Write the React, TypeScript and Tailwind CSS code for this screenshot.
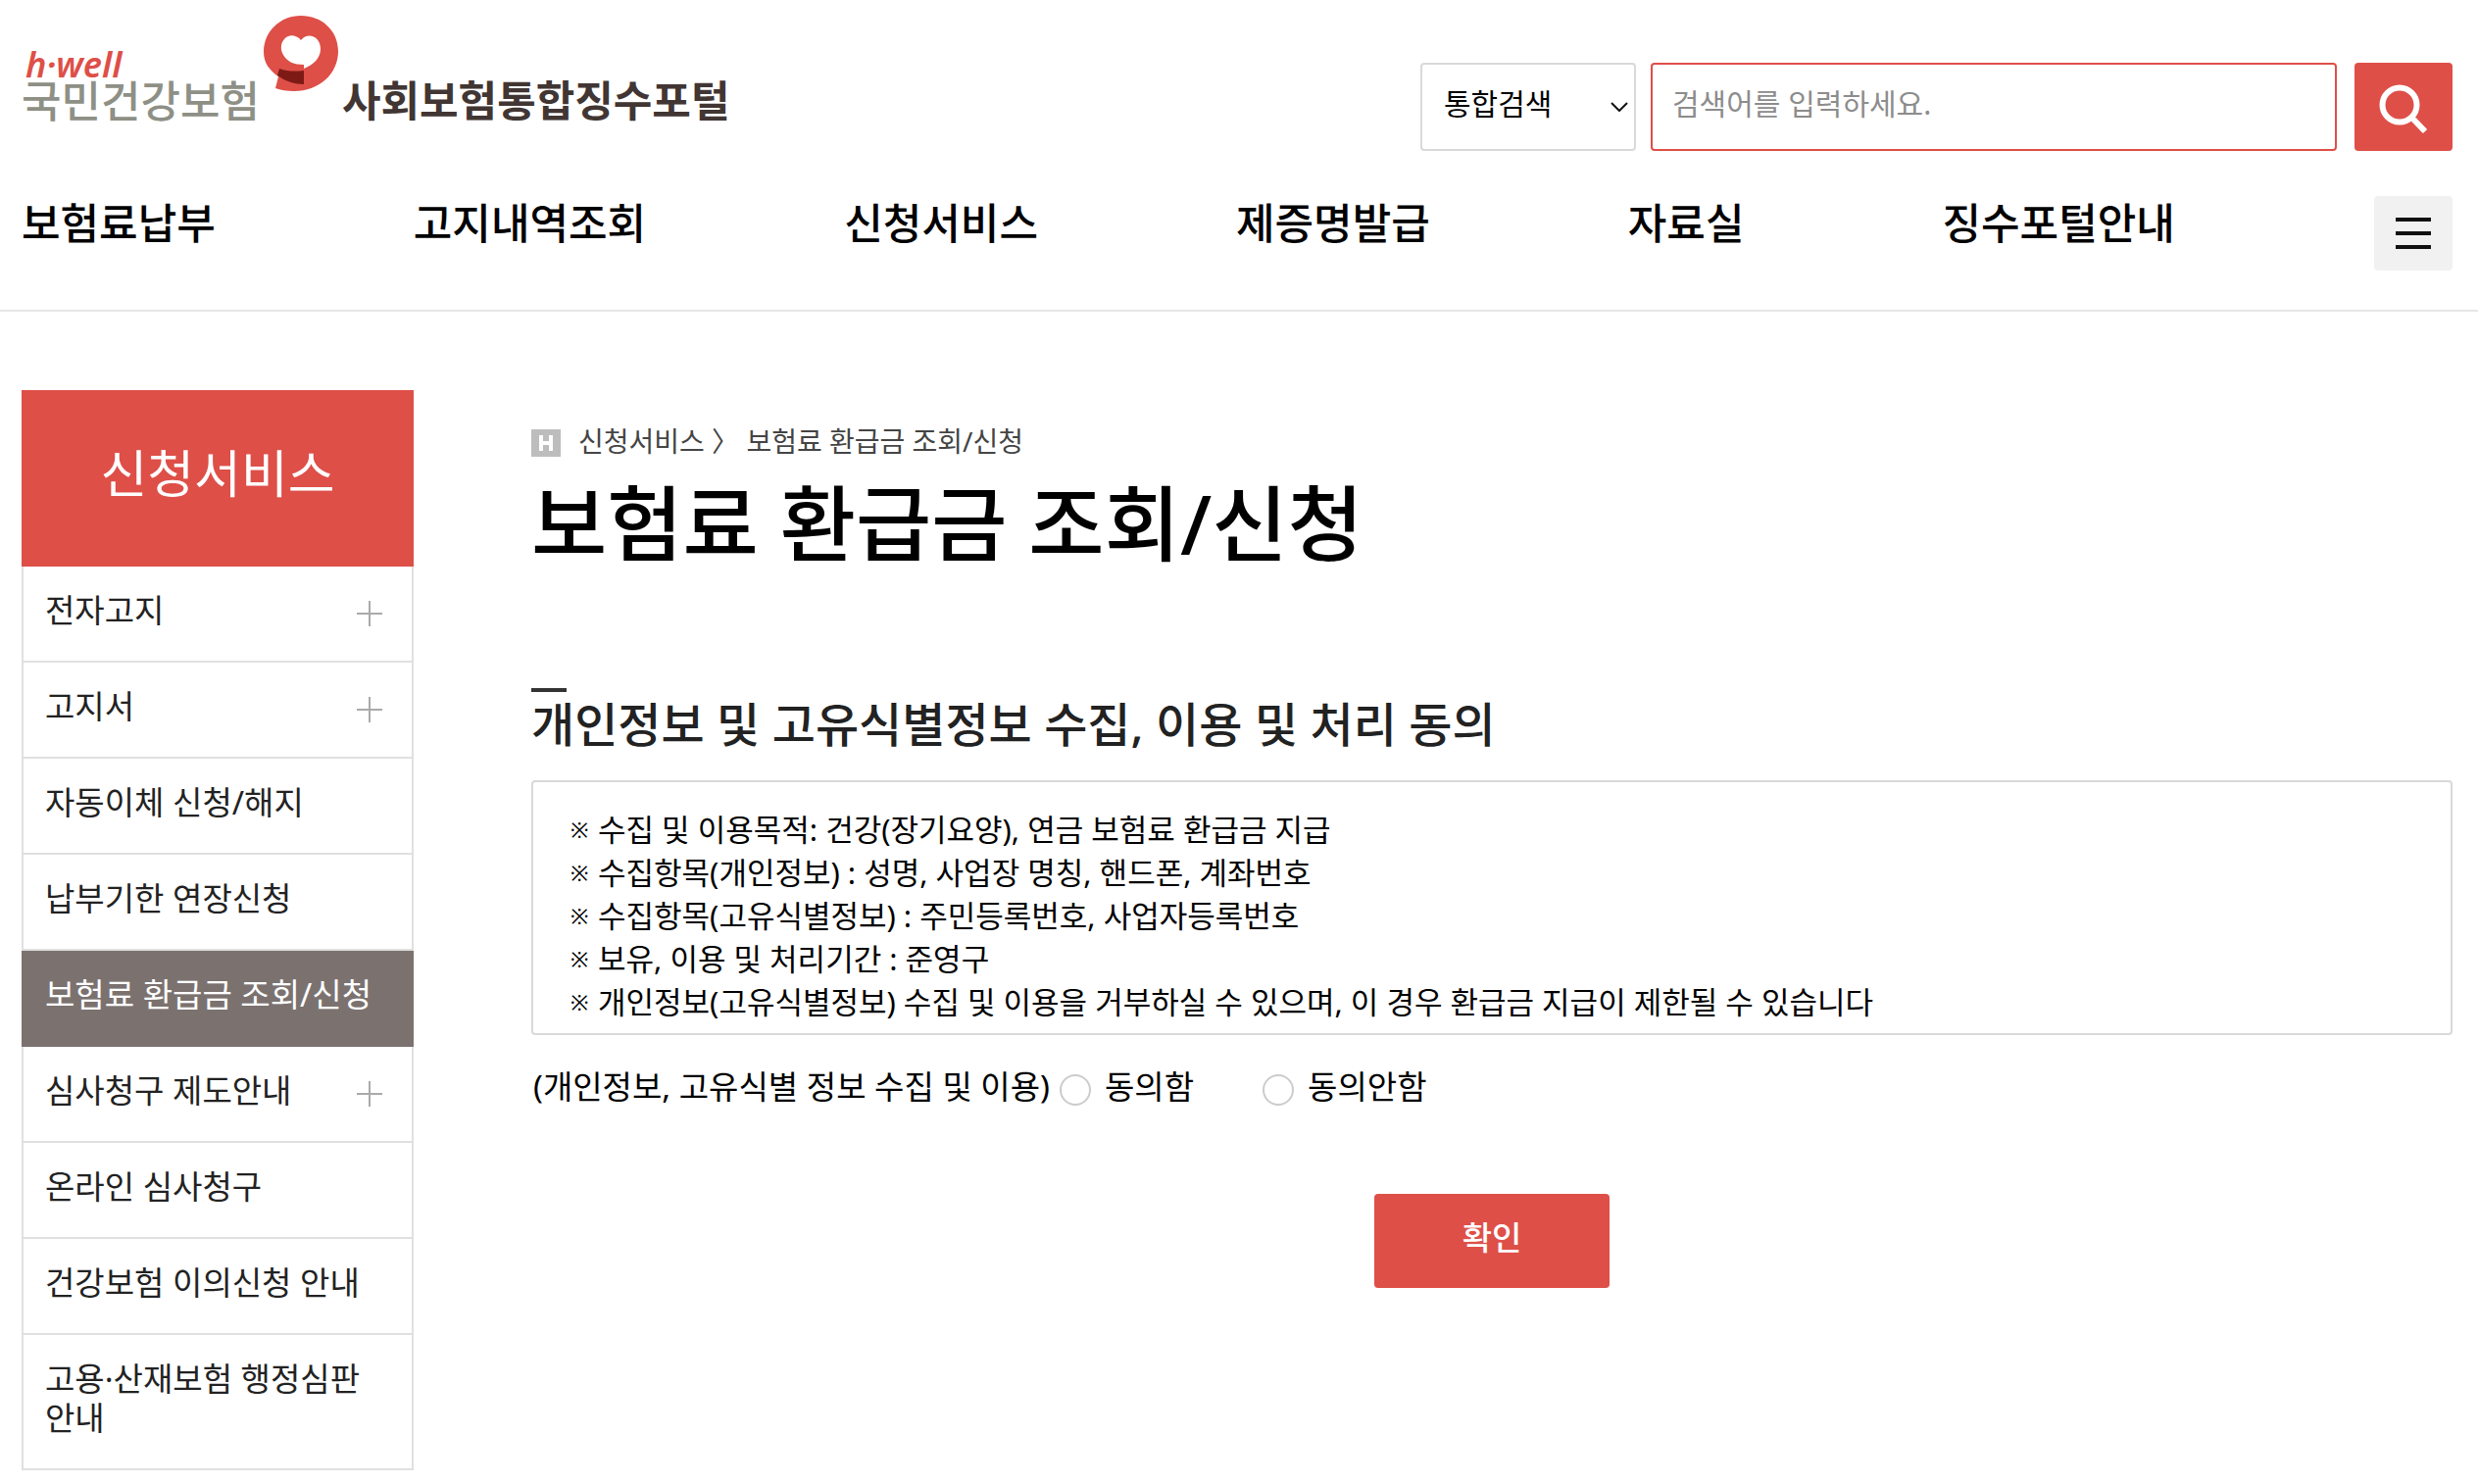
import { useState } from 'react';
import type { FormEvent } from 'react';

interface SideItem {
  label: string;
  expandable?: boolean;
  active?: boolean;
}

const NAV_ITEMS = ['보험료납부', '고지내역조회', '신청서비스', '제증명발급', '자료실', '징수포털안내'];

const SIDE_ITEMS: SideItem[] = [
  { label: '전자고지', expandable: true },
  { label: '고지서', expandable: true },
  { label: '자동이체 신청/해지' },
  { label: '납부기한 연장신청' },
  { label: '보험료 환급금 조회/신청', active: true },
  { label: '심사청구 제도안내', expandable: true },
  { label: '온라인 심사청구' },
  { label: '건강보험 이의신청 안내' },
  { label: '고용·산재보험 행정심판 안내' },
];

const TERMS = [
  '수집 및 이용목적: 건강(장기요양), 연금 보험료 환급금 지급',
  '수집항목(개인정보) : 성명, 사업장 명칭, 핸드폰, 계좌번호',
  '수집항목(고유식별정보) : 주민등록번호, 사업자등록번호',
  '보유, 이용 및 처리기간 : 준영구',
  '개인정보(고유식별정보) 수집 및 이용을 거부하실 수 있으며, 이 경우 환급금 지급이 제한될 수 있습니다',
];

const Logo = () => (
  <a href="#" className="flex items-end">
    <span className="flex flex-col">
      <span className="pl-1 text-[36px] leading-8 font-semibold text-[#de4f48] italic">h·well</span>
      <span className="text-[44px] leading-[42px] font-medium text-[#8e9086]">국민건강보험</span>
    </span>
    <svg width="76" height="78" viewBox="0 0 76 78" className="mb-[30px] ml-1 shrink-0" aria-hidden="true">
      <path
        fill="#de4f48"
        fillRule="evenodd"
        d="M38 0C59 0 76 15 76 36C76 60 56 77 31 77C24 77 17 76 12 74L15 62C6 56 0 48 0 37C0 16 17 0 38 0ZM38 25C33 19 25 19 21 24C17 28 17 35 20 40C24 47 31 50 41 50V54C51 50 58 43 58 34C58 21 45 16 38 25Z"
      />
      <path fill="#7d1a16" d="M16 54C24 57 33 57 41 56V70C32 70 22 67 14 61Z" />
    </svg>
    <span className="pl-1 text-[43px] leading-[42px] font-bold text-[#413633]">사회보험통합징수포털</span>
  </a>
);

const SearchForm = () => {
  const [keyword, setKeyword] = useState('');

  const submit = (event: FormEvent) => {
    event.preventDefault();
  };

  return (
    <form onSubmit={submit} className="flex h-[90px]">
      <div className="relative">
        <select
          aria-label="검색 범위"
          className="h-full w-[220px] appearance-none rounded border-2 border-[#d9d9d9] bg-white pb-2 pl-[22px] text-[30px] text-black"
        >
          <option>통합검색</option>
        </select>
        <svg width="18" height="10" viewBox="0 0 18 10" className="pointer-events-none absolute top-10 right-2" aria-hidden="true">
          <path d="M1 1l8 8 8-8" fill="none" stroke="#111" strokeWidth="2" />
        </svg>
      </div>
      <input
        type="text"
        aria-label="검색어"
        value={keyword}
        onChange={(e) => setKeyword(e.target.value)}
        placeholder="검색어를 입력하세요."
        className="ml-[15px] w-[700px] rounded border-2 border-[#de4f48] pb-2 pl-5 text-[30px] outline-none placeholder:text-[#8c8c8c]"
      />
      <button type="submit" aria-label="검색" className="ml-[18px] flex w-[100px] items-center justify-center rounded bg-[#de4f48] pt-1">
        <svg width="50" height="50" viewBox="0 0 50 50" fill="none" stroke="#fff" aria-hidden="true">
          <circle cx="21" cy="21" r="17.5" strokeWidth="6" />
          <path d="M33.5 34L47 48" strokeWidth="6" />
        </svg>
      </button>
    </form>
  );
};

const SideMenu = () => (
  <aside className="w-[400px] shrink-0">
    <h2 className="flex h-[180px] items-center justify-center bg-[#de4f48] pb-2.5 text-[52px] text-white">신청서비스</h2>
    <ul>
      {SIDE_ITEMS.map((item) => (
        <li key={item.label}>
          <a
            href="#"
            className={
              item.active
                ? 'flex border-2 border-t-0 border-[#7b7270] bg-[#7b7270] pt-[25px] pb-[31px] pl-[22px] text-white'
                : 'flex border-2 border-t-0 border-[#e0e0e0] pt-[25px] pb-[31px] pl-[22px] text-[#222]'
            }
          >
            <span className="flex-1 text-[33px] leading-10 break-keep">{item.label}</span>
            {item.expandable && (
              <svg width="26" height="26" viewBox="0 0 26 26" className="mt-2.5 mr-[30px]" aria-hidden="true">
                <path d="M13 0v26M0 13h26" stroke="#aaa" strokeWidth="2" />
              </svg>
            )}
          </a>
        </li>
      ))}
    </ul>
  </aside>
);

const Agreement = () => {
  const [agree, setAgree] = useState('');
  const radioClass =
    'size-8 appearance-none rounded-full border-2 border-[#ccc] bg-white checked:border-[10px] checked:border-[#de4f48]';

  return (
    <fieldset className="mt-8 flex h-12 items-center text-[33px] leading-10 text-black">
      <legend className="float-left pb-1.5 pl-0.5">(개인정보, 고유식별 정보 수집 및 이용)</legend>
      <label className="ml-2.5 flex items-center gap-3.5">
        <input type="radio" name="agree" value="y" checked={agree === 'y'} onChange={() => setAgree('y')} className={radioClass} />
        <span className="pb-1.5">동의함</span>
      </label>
      <label className="ml-[70px] flex items-center gap-3.5">
        <input type="radio" name="agree" value="n" checked={agree === 'n'} onChange={() => setAgree('n')} className={radioClass} />
        <span className="pb-1.5">동의안함</span>
      </label>
    </fieldset>
  );
};

export default function App() {
  return (
    <div className="bg-white font-['Noto_Sans','Noto_Sans_CJK_KR',sans-serif]">
      <header className="border-b-2 border-[#e6e6e6] pr-[26px] pl-[22px]">
        <div className="flex h-[154px] items-end justify-between">
          <div className="pb-[30px]">
            <Logo />
          </div>
          <SearchForm />
        </div>
        <div className="flex h-[162px] justify-between pt-[46px]">
          <nav className="flex gap-[202px] text-[43px] leading-[56px] font-medium text-black">
            {NAV_ITEMS.map((item) => (
              <a key={item} href="#" className="whitespace-nowrap">{item}</a>
            ))}
          </nav>
          <button type="button" aria-label="전체메뉴" className="flex h-[76px] w-20 items-center justify-center rounded bg-[#f1f1f1]">
            <svg width="36" height="32" viewBox="0 0 36 32" aria-hidden="true">
              <path d="M0 2h36M0 16h36M0 30h36" stroke="#111" strokeWidth="4" />
            </svg>
          </button>
        </div>
      </header>

      <div className="flex gap-[120px] pt-20 pr-[26px] pb-3.5 pl-[22px]">
        <SideMenu />

        <main className="flex-1 pt-7">
          {/* Breadcrumb */}
          <div className="flex h-12 items-center text-[28px] leading-10 text-[#444]">
            <svg width="30" height="28" viewBox="0 0 30 28" className="mt-1 mr-[18px]" aria-hidden="true">
              <path fill="#bdbdbd" d="M0 0h30v28H0z" />
              <path d="M10 6v16M20 6v16M10 14h10" stroke="#fff" strokeWidth="4" />
            </svg>
            <p>
              <a href="#">신청서비스</a> 〉 <a href="#">보험료 환급금 조회/신청</a>
            </p>
          </div>
          <h1 className="text-[84px] leading-[120px] font-medium text-black">보험료 환급금 조회/신청</h1>

          {/* Consent */}
          <section className="mt-[108px]">
            <div className="h-1 w-9 bg-[#333]" />
            <h3 className="text-[48px] leading-[66px] font-medium text-[#222]">개인정보 및 고유식별정보 수집, 이용 및 처리 동의</h3>
            <ul className="mt-6 rounded border-2 border-[#d9d9d9] pt-[26px] pb-2.5 pl-[38px] text-[31px] leading-[44px] text-black">
              {TERMS.map((term) => (
                <li key={term} className="flex">
                  <span className="w-7 shrink-0 text-[22px]">※</span>
                  {term}
                </li>
              ))}
            </ul>
            <Agreement />
          </section>

          <div className="mt-[82px] flex justify-center">
            <button type="button" className="h-24 w-60 rounded bg-[#de4f48] pb-1.5 text-[33px] font-medium text-white">확인</button>
          </div>
        </main>
      </div>
    </div>
  );
}
